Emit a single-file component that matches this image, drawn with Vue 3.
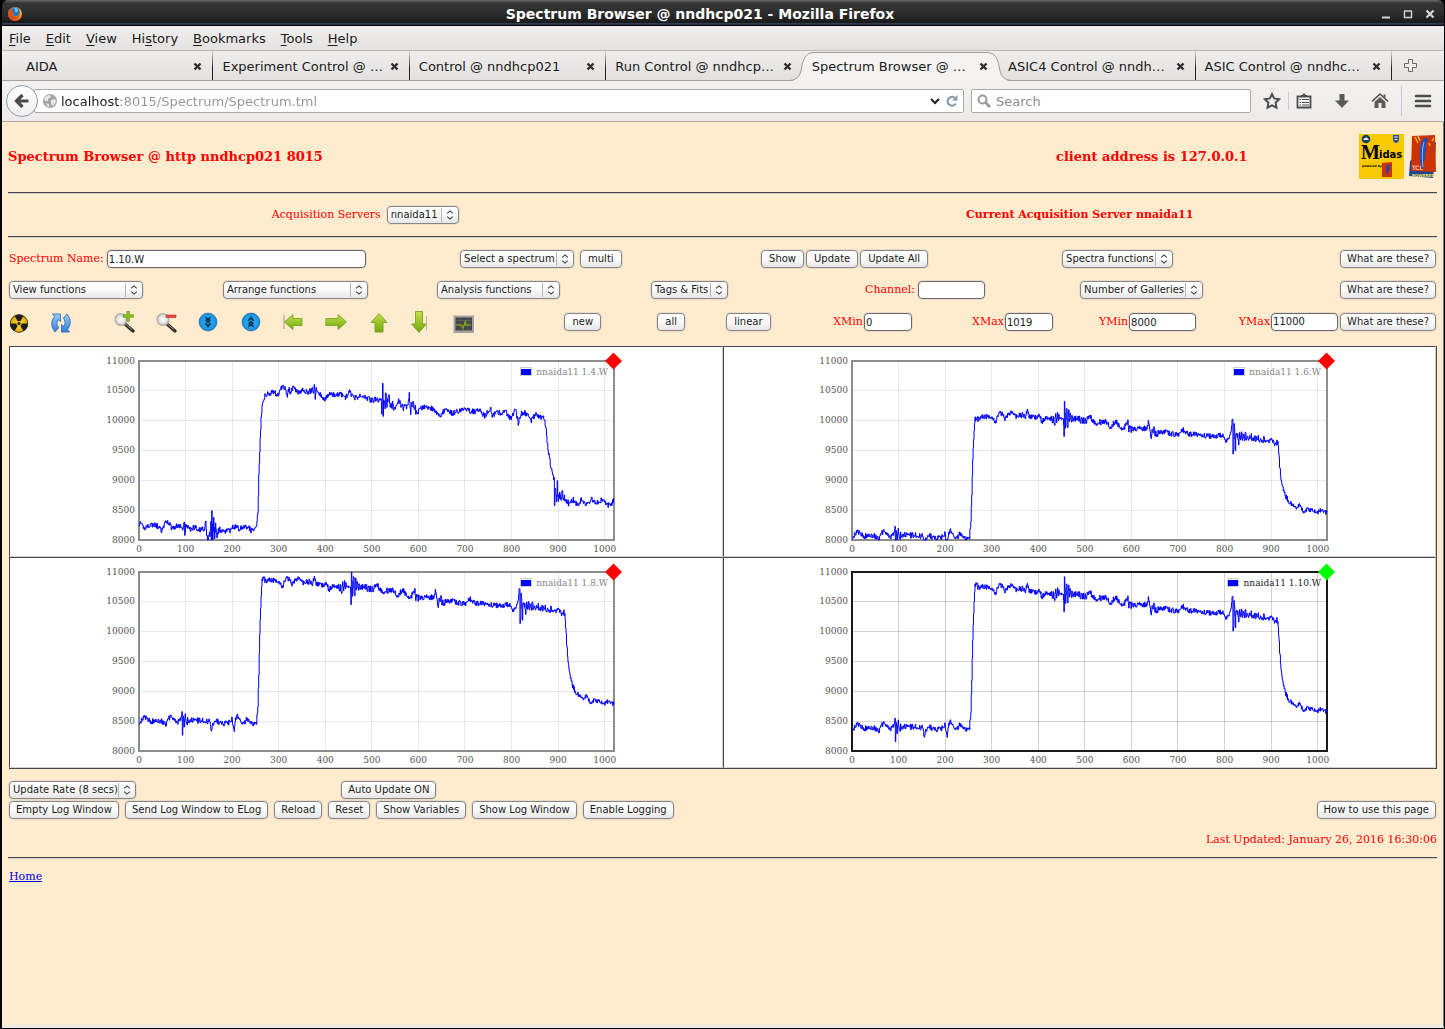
<script setup>
import { ref } from 'vue'

const menus = [
  ['', 'F', 'ile'],
  ['', 'E', 'dit'],
  ['', 'V', 'iew'],
  ['Hi', 's', 'tory'],
  ['', 'B', 'ookmarks'],
  ['', 'T', 'ools'],
  ['', 'H', 'elp'],
]

const tabs = [
  'AIDA',
  'Experiment Control @ …',
  'Control @ nndhcp021',
  'Run Control @ nndhcp…',
  'Spectrum Browser @ …',
  'ASIC4 Control @ nndh…',
  'ASIC Control @ nndhc…',
]
const activeTab = ref(4)

const url = ref('localhost:8015/Spectrum/Spectrum.tml')
const spectrumName = ref('1.10.W')
const channel = ref('')
const limits = ref({ xmin: '0', xmax: '1019', ymin: '8000', ymax: '11000' })

const logButtons = [
  'Empty Log Window',
  'Send Log Window to ELog',
  'Reload',
  'Reset',
  'Show Variables',
  'Show Log Window',
  'Enable Logging',
]

// plot geometry, in svg units
const plot = { left: 45, top: 14, width: 475, height: 179 }
const X_MAX = 1020
const Y_MIN = 8000
const Y_MAX = 11000
const xTicks = [0, 100, 200, 300, 400, 500, 600, 700, 800, 900, 1000]
const yTicks = [8000, 8500, 9000, 9500, 10000, 10500, 11000]

const px = (x) => plot.left + (x / X_MAX) * plot.width
const py = (y) => plot.top + ((Y_MAX - y) / (Y_MAX - Y_MIN)) * plot.height

const base14 = [
  [0, 8280], [10, 8200], [25, 8260], [38, 8240], [48, 8150], [58, 8310], [62, 8310], [70, 8200],
  [82, 8240], [95, 8200], [97, 8300], [98, 8120], [100, 8230], [110, 8190], [120, 8220], [130, 8170],
  [141, 8190], [143, 8340], [145, 8060], [147, 8000], [149, 8080], [152, 8100], [154, 8300], [155, 8000],
  [156, 8480], [158, 8000], [160, 8320], [162, 8080], [164, 8250], [168, 8050], [170, 8180], [180, 8140],
  [195, 8160], [200, 8230], [215, 8190], [225, 8240], [235, 8210], [240, 8160], [251, 8220], [255, 8450],
  [257, 9100], [260, 9700], [262, 10080], [265, 10330], [270, 10410], [280, 10460], [290, 10490], [297, 10410],
  [303, 10530], [310, 10580], [316, 10480], [318, 10380], [320, 10540], [325, 10470], [330, 10550], [342, 10470],
  [350, 10510], [360, 10480], [370, 10500], [371, 10590], [374, 10450], [376, 10570], [378, 10380], [380, 10530],
  [390, 10450], [398, 10350], [408, 10460], [420, 10420], [435, 10440], [443, 10380], [451, 10490], [460, 10380],
  [475, 10410], [490, 10370], [500, 10340], [508, 10360], [520, 10320], [521, 10120], [523, 10670], [524, 10100],
  [526, 10480], [528, 10200], [530, 10480], [532, 10190], [535, 10400], [540, 10280], [547, 10200], [557, 10340],
  [568, 10220], [577, 10260], [580, 10480], [582, 10200], [590, 10260], [597, 10120], [602, 10190], [615, 10220],
  [633, 10200], [645, 10080], [660, 10200], [672, 10120], [685, 10160], [700, 10220], [712, 10150], [730, 10170],
  [742, 10080], [755, 10210], [758, 10040], [762, 10120], [775, 10120], [787, 10150], [797, 10040], [805, 10120],
  [808, 10220], [812, 10060], [814, 9960], [820, 10120], [830, 10130], [842, 10010], [850, 10100], [866, 10050],
  [870, 10040], [873, 9900], [878, 9500], [884, 9230], [891, 9000], [892, 8570], [894, 9000], [896, 8600],
  [898, 8960], [900, 8650], [903, 8850], [905, 8640], [908, 8780], [915, 8660], [925, 8620], [930, 8680],
  [942, 8580], [950, 8690], [962, 8580], [972, 8680], [980, 8610], [992, 8670], [1000, 8640], [1006, 8580],
  [1014, 8600], [1020, 8700],
]

const base18 = [
  [0, 8490], [10, 8550], [15, 8560], [25, 8490], [40, 8520], [50, 8490], [57, 8450], [65, 8560],
  [70, 8560], [80, 8480], [90, 8520], [92, 8650], [93, 8250], [95, 8650], [97, 8380], [99, 8640],
  [101, 8440], [104, 8560], [110, 8510], [130, 8510], [151, 8500], [154, 8350], [158, 8430], [165, 8500],
  [180, 8460], [197, 8480], [199, 8570], [201, 8420], [204, 8370], [207, 8520], [211, 8580], [218, 8500],
  [221, 8420], [230, 8520], [240, 8490], [250, 8440], [252, 8480], [255, 8720], [257, 9300], [259, 10000],
  [262, 10600], [264, 10850], [266, 10930], [270, 10860], [290, 10860], [300, 10830], [308, 10770], [315, 10890],
  [321, 10880], [328, 10800], [340, 10890], [352, 10820], [368, 10840], [372, 10800], [376, 10900], [381, 10790],
  [390, 10780], [400, 10800], [408, 10710], [418, 10780], [430, 10760], [433, 10650], [436, 10770], [453, 10760],
  [455, 10500], [456, 11000], [458, 10630], [460, 10900], [463, 10690], [465, 10850], [468, 10750], [500, 10710],
  [512, 10760], [522, 10660], [535, 10690], [546, 10700], [555, 10600], [566, 10710], [575, 10590], [585, 10600],
  [591, 10690], [594, 10570], [610, 10570], [632, 10580], [637, 10700], [641, 10440], [647, 10580], [653, 10450],
  [660, 10510], [680, 10500], [698, 10460], [710, 10550], [718, 10490], [750, 10450], [775, 10440], [795, 10450],
  [803, 10330], [812, 10450], [815, 10580], [817, 10600], [818, 10160], [820, 10600], [823, 10290], [826, 10500],
  [829, 10330], [833, 10430], [850, 10400], [880, 10380], [900, 10350], [908, 10290], [912, 10330], [915, 10240],
  [918, 9800], [921, 9500], [925, 9250], [930, 9120], [935, 9020], [945, 8940], [952, 8880], [960, 8920],
  [970, 8810], [980, 8840], [995, 8790], [1010, 8840], [1020, 8780],
]

const shift16 = [[0, -430], [255, -430], [258, -560], [262, -760], [266, -890], [272, -810], [300, -780], [400, -720], [912, -690], [918, -560], [925, -400], [935, -340], [1020, -330]]
const shift110 = [[0, -120], [264, -90], [270, -110], [400, -120], [1020, -130]]

// ringing after a pulse: start, amplitude, decay length
const rings14 = [[98, 30, 15], [160, 60, 14], [372, 60, 14], [525, 150, 22], [582, 80, 18], [756, 40, 12], [808, 70, 16], [893, 120, 16]]
const rings18 = [[92, 100, 20], [427, 90, 24], [456, 130, 26], [590, 60, 15], [640, 60, 14], [816, 160, 28], [868, 80, 16]]

function lerp(points, x) {
  let i = 1
  while (i < points.length - 1 && points[i][0] < x) i++
  const [x0, y0] = points[i - 1]
  const [x1, y1] = points[i]
  return y0 + ((x - x0) / (x1 - x0)) * (y1 - y0)
}

function tracePath(base, shift, rings, seed) {
  let s = seed
  const rand = () => {
    s = (s * 16807) % 2147483647
    return s / 2147483647
  }
  let d = ''
  for (let x = 0; x <= X_MAX; x++) {
    let y = lerp(base, x) + (shift ? lerp(shift, x) : 0)
    y += (rand() - 0.5) * 90
    const sign = x % 4 < 2 ? 1 : -1
    for (const [start, amp, decay] of rings) {
      if (x >= start) y += sign * rand() * amp * Math.exp((start - x) / decay)
    }
    y = Math.min(Y_MAX, Math.max(Y_MIN, y))
    // each channel is drawn as a flat step
    d += x ? `H${px(x).toFixed(2)}V${py(y).toFixed(2)}` : `M${px(x)} ${py(y).toFixed(2)}`
  }
  return d
}

const spectra = [
  { name: 'nnaida11 1.4.W', legendX: 427, path: tracePath(base14, null, rings14, 41) },
  { name: 'nnaida11 1.6.W', legendX: 427, path: tracePath(base18, shift16, rings18, 77) },
  { name: 'nnaida11 1.8.W', legendX: 427, path: tracePath(base18, null, rings18, 77) },
  { name: 'nnaida11 1.10.W', legendX: 421, path: tracePath(base18, shift110, rings18, 77) },
]
const selected = ref(3)
</script>

<template>
  <div class="window">
    <!-- shared gradients -->
    <svg class="defs" width="0" height="0" aria-hidden="true">
      <defs>
        <linearGradient id="green" x1="0" y1="0" x2="0" y2="1">
          <stop offset="0" stop-color="#c4e04a" />
          <stop offset="1" stop-color="#6fa80d" />
        </linearGradient>
        <radialGradient id="blue">
          <stop offset="0" stop-color="#2fb8f5" />
          <stop offset="0.7" stop-color="#1ba0ea" />
          <stop offset="1" stop-color="#1c7cd0" />
        </radialGradient>
        <linearGradient id="sync" x1="0" y1="0" x2="0" y2="1">
          <stop offset="0" stop-color="#9bcbf7" />
          <stop offset="1" stop-color="#2f7fd6" />
        </linearGradient>
        <radialGradient id="lens">
          <stop offset="0" stop-color="#ffffff" />
          <stop offset="1" stop-color="#d3d3d3" />
        </radialGradient>
        <radialGradient id="hazard">
          <stop offset="0" stop-color="#ffe23a" />
          <stop offset="1" stop-color="#e0a800" />
        </radialGradient>
        <linearGradient id="fox" x1="0" y1="1" x2="1" y2="0">
          <stop offset="0" stop-color="#e0401c" />
          <stop offset="0.6" stop-color="#f58a1f" />
          <stop offset="1" stop-color="#ffe14d" />
        </linearGradient>
      </defs>
    </svg>

    <header class="titlebar">
      <svg class="fox" viewBox="0 0 16 16">
        <circle cx="8" cy="8" r="7" fill="url(#fox)" />
        <path d="M4 3Q7 0 11 2Q14 5 12 9Q10 11 7 10Q5 8 6 6Q4 5 4 3Z" fill="#2a76b8" />
        <path d="M7 2Q10 1 11 4Q11 7 8 6Q9 4 7 2Z" fill="#72c0ec" />
        <path d="M1 5L3 3L4 5L7 6L5 8Q6 11 9 11Q12 11 13 8Q12 13 8 14Q2 14 1 8Z" fill="#d9511c" />
      </svg>
      <h1>Spectrum Browser @ nndhcp021 - Mozilla Firefox</h1>
      <div class="win-buttons">
        <button aria-label="Minimize"><svg viewBox="0 0 10 10"><path d="M1 8.5H9" stroke="#d6d6d6" stroke-width="2" /></svg></button>
        <button aria-label="Maximize"><svg viewBox="0 0 10 10"><path d="M1.5 2V8.5H8.5V2M1 2H9" fill="none" stroke="#d6d6d6" stroke-width="1.4" /></svg></button>
        <button aria-label="Close"><svg viewBox="0 0 10 10"><path d="M1.5 1.5L8.5 8.5M8.5 1.5L1.5 8.5" stroke="#d6d6d6" stroke-width="2.2" /></svg></button>
      </div>
    </header>

    <nav class="menubar">
      <button v-for="[pre, key, post] in menus" :key="post">{{ pre }}<u>{{ key }}</u>{{ post }}</button>
    </nav>

    <div class="tabstrip">
      <div v-for="(tab, i) in tabs" :key="tab" class="tab" :class="{ active: i === activeTab, divided: i !== activeTab && i !== activeTab - 1 }">
        <template v-if="i === activeTab">
          <svg class="curve left" viewBox="0 0 23 29"><path d="M0 29Q9 28.500 11 19Q13 .5 23 .5V29Z" fill="#f4f3f2" /><path d="M0 28.500Q9 28 11 19Q13 .5 23 .5" fill="none" stroke="#9b9a98" /></svg>
          <span class="cap"></span>
          <svg class="curve right" viewBox="0 0 23 29"><path d="M23 29Q14 28.500 12 19Q10 .5 0 .5V29Z" fill="#f4f3f2" /><path d="M23 28.500Q14 28 12 19Q10 .5 0 .5" fill="none" stroke="#9b9a98" /></svg>
        </template>
        <button class="tab-label" @click="activeTab = i">{{ tab }}</button>
        <button class="tab-close" :aria-label="'Close ' + tab"><svg viewBox="0 0 9 9"><path d="M1.500 1.500L7.500 7.500M7.500 1.500L1.500 7.500" stroke="#2f2f2f" stroke-width="2.400" /></svg></button>
      </div>
      <button class="new-tab" aria-label="New tab">
        <svg viewBox="0 0 13 13"><path d="M4.500 .5H8.500V4.500H12.500V8.500H8.500V12.500H4.500V8.500H.5V4.500H4.500Z" fill="#f0efee" stroke="#6a6a6a" /></svg>
      </button>
    </div>

    <div class="navbar">
      <button class="back" aria-label="Back">
        <svg viewBox="0 0 16 16"><path d="M8.500 2L2.500 8L8.500 14M3 8H14.500" fill="none" stroke="#4a4a4a" stroke-width="3.200" /></svg>
      </button>
      <div class="urlbar">
        <svg class="globe" viewBox="0 0 14 14">
          <circle cx="7" cy="7" r="7" fill="#a3a3a3" />
          <path d="M2 3Q4 1 7 1L8 3L5 5L5 7L2 7L1 5ZM8 6L12 5L13 8L10 12L8 10ZM3 9L6 10L6 13L4 12Z" fill="#e6e6e6" />
        </svg>
        <input v-model="url" class="url" aria-label="Address" />
        <svg class="drop" viewBox="0 0 10 7"><path d="M1 1L5 5L9 1" fill="none" stroke="#222" stroke-width="2" /></svg>
        <button class="reload" aria-label="Reload page">
          <svg viewBox="0 0 12 12"><path d="M9.800 8.500A4.400 4.400 0 1 1 8.500 2.600" fill="none" stroke="#8697a8" stroke-width="2" /><path d="M11.500 0V5.500H6Z" fill="#8697a8" /></svg>
        </button>
      </div>
      <div class="search">
        <svg viewBox="0 0 14 14"><circle cx="5.500" cy="5.500" r="4" fill="none" stroke="#999" stroke-width="2" /><path d="M8.500 8.500L13 13" stroke="#999" stroke-width="2.600" /></svg>
        <input placeholder="Search" aria-label="Search" />
      </div>
      <div class="tools">
        <button aria-label="Bookmark"><svg viewBox="0 0 18 18"><path d="M9 2L11.200 6.500L16.200 7.200L12.600 10.700L13.500 15.700L9 13.300L4.500 15.700L5.400 10.700L1.800 7.200L6.800 6.500Z" fill="none" stroke="#4d4d4d" stroke-width="1.900" /></svg></button>
        <i class="bar short"></i>
        <button aria-label="Bookmarks menu"><svg viewBox="0 0 18 18"><path d="M2.500 4.500H15.500V15.500H2.500Z" fill="#fafafa" stroke="#4d4d4d" stroke-width="1.800" /><path d="M6 5V3H7.500Q7.500 1.500 9 1.500T10.500 3H12V5Z" fill="#4d4d4d" /><path d="M4.500 7.500H6M7 7.500H14M4.500 10.500H6M7 10.500H14M4.500 13H6M7 13H14" stroke="#4d4d4d" /></svg></button>
        <button aria-label="Downloads"><svg viewBox="0 0 18 18"><path d="M6.500 2H11.500V8.500H16L9 16L2 8.500H6.500Z" fill="#5a5a5a" /></svg></button>
        <button aria-label="Home page"><svg viewBox="0 0 18 18"><path d="M1 9.500L9 2L17 9.500" fill="none" stroke="#4d4d4d" stroke-width="1.600" /><path d="M3.500 10L9 5L14.500 10V16H10.500V11H7.500V16H3.500ZM12.500 2.500H14.500V6L12.500 4.500Z" fill="#5a5a5a" /></svg></button>
        <i class="bar"></i>
        <button aria-label="Open menu"><svg viewBox="0 0 18 18"><path d="M2 4H16M2 9H16M2 14H16" stroke="#4d4d4d" stroke-width="2.600" stroke-linecap="round" /></svg></button>
      </div>
    </div>

    <main class="page">
      <div class="masthead">
        <h2>Spectrum Browser @ http nndhcp021 8015</h2>
        <h2>client address is 127.0.0.1</h2>
        <div class="logos">
          <a href="#midas" aria-label="Midas">
            <svg width="45" height="45" viewBox="0 0 45 45">
              <path d="M0 0H45V45H0Z" fill="#f8c800" />
              <circle cx="7" cy="5" r="4.300" fill="#123e6b" />
              <path d="M4 6Q7 1 10 6Z" fill="#fff" />
              <path d="M34 1H40V5Q40 8 37 9Q34 8 34 5Z" fill="#2450a0" />
              <path d="M35 3H39M35.500 5.500H38.500" stroke="#dfe6f5" />
              <text x="2" y="25" class="logo-m">M</text>
              <text x="20" y="24" class="logo-idas">idas</text>
              <text x="3" y="33" class="logo-tiny">powered by</text>
              <path d="M23 29L33 28V43H23Z" fill="#cc3300" />
              <path d="M28 41Q26 36 28 31Q30 29 31 32Q30 38 28 41Z" fill="#2546a8" />
            </svg>
          </a>
          <a href="#tcl" aria-label="Tcl powered">
            <svg width="28" height="45" viewBox="0 0 28 45">
              <path d="M1 27L27 8L26 26L24 44L0 42Z" fill="#1d4796" />
              <path d="M3 2L26 1L27 38L2 37Z" fill="#cc3300" />
              <path d="M12 33Q9 20 12 10Q14 3 18 4Q20 6 17 9Q18 15 16 20Q17 26 14 29L15 35Z" fill="#1f4fc4" />
              <path d="M14 33Q12 19 15 8" fill="none" stroke="#9fb8ea" />
              <path d="M6 3L9 9M9 2L11 7M20 9L21 12M23 7L25 4" stroke="#f0b020" stroke-width="1.500" />
              <text x="3" y="36" class="logo-tcl">TCL</text>
              <text x="3" y="43" class="logo-powered">POWERED</text>
            </svg>
          </a>
        </div>
      </div>
      <hr />

      <div class="servers">
        <div>
          <label for="servers">Acquisition Servers</label>
          <span class="combo w72"><select id="servers"><option>nnaida11</option></select><svg viewBox="0 0 7 9"><path d="M1 3L3.500 .8L6 3M1 6L3.500 8.200L6 6" /></svg></span>
        </div>
        <strong>Current Acquisition Server nnaida11</strong>
      </div>
      <hr />

      <form class="controls" @submit.prevent>
        <div class="row names">
          <div>
            <label for="name">Spectrum Name:</label><input id="name" v-model="spectrumName" class="box w259" />
          </div>
          <div class="spaced">
            <span class="combo w114"><select aria-label="Select a spectrum"><option>Select a spectrum</option></select><svg viewBox="0 0 7 9"><path d="M1 3L3.500 .8L6 3M1 6L3.500 8.200L6 6" /></svg></span>
            <button>multi</button>
          </div>
          <div class="tight">
            <button>Show</button>
            <button>Update</button>
            <button>Update All</button>
          </div>
          <div>
            <span class="combo w111"><select aria-label="Spectra functions"><option>Spectra functions</option></select><svg viewBox="0 0 7 9"><path d="M1 3L3.500 .8L6 3M1 6L3.500 8.200L6 6" /></svg></span>
          </div>
          <button>What are these?</button>
        </div>

        <div class="row functions">
          <div><span class="combo w134"><select aria-label="View functions"><option>View functions</option></select><svg viewBox="0 0 7 9"><path d="M1 3L3.500 .8L6 3M1 6L3.500 8.200L6 6" /></svg></span></div>
          <div><span class="combo w145"><select aria-label="Arrange functions"><option>Arrange functions</option></select><svg viewBox="0 0 7 9"><path d="M1 3L3.500 .8L6 3M1 6L3.500 8.200L6 6" /></svg></span></div>
          <div><span class="combo w123"><select aria-label="Analysis functions"><option>Analysis functions</option></select><svg viewBox="0 0 7 9"><path d="M1 3L3.500 .8L6 3M1 6L3.500 8.200L6 6" /></svg></span></div>
          <div><span class="combo w77"><select aria-label="Tags &amp; Fits"><option>Tags &amp; Fits</option></select><svg viewBox="0 0 7 9"><path d="M1 3L3.500 .8L6 3M1 6L3.500 8.200L6 6" /></svg></span></div>
          <div><label for="channel">Channel:</label><input id="channel" v-model="channel" class="box w67" /></div>
          <div><span class="combo w123"><select aria-label="Number of Galleries"><option>Number of Galleries</option></select><svg viewBox="0 0 7 9"><path d="M1 3L3.500 .8L6 3M1 6L3.500 8.200L6 6" /></svg></span></div>
          <button>What are these?</button>
        </div>

        <div class="row icons">
          <button class="icon" aria-label="Zero">
            <svg viewBox="1 -1 22 22">
              <circle cx="11" cy="11.500" r="9" fill="#1c1c1c" />
              <path d="M11 11.500L6.500 3.700A9 9 0 0 1 15.500 3.700ZM11 11.500L19.900 11.500A9 9 0 0 1 15.500 19.300ZM11 11.500L6.500 19.300A9 9 0 0 1 2.100 11.500Z" fill="#1c1c1c" />
              <path d="M11 11.500L2.100 11.500A9 9 0 0 1 6.500 3.700ZM11 11.500L15.500 3.700A9 9 0 0 1 19.900 11.500ZM11 11.500L15.500 19.300A9 9 0 0 1 6.500 19.300Z" fill="url(#hazard)" />
              <circle cx="11" cy="11.500" r="2.600" fill="#f5c710" /><circle cx="11" cy="11.500" r="1.500" fill="#1c1c1c" />
              <circle cx="11" cy="11.500" r="8.700" fill="none" stroke="#333" stroke-width=".8" />
            </svg>
          </button>
          <button class="icon" aria-label="Refresh">
            <svg viewBox="1 -1 22 22">
              <path d="M10.500 2V9.500L8 7.500Q5.500 11.500 8.500 16L5 20Q-1.500 12 4.500 4.500L2.500 2Z" fill="url(#sync)" stroke="#2565b5" stroke-width=".8" />
              <path d="M11.500 20V12.500L14 14.500Q16.500 10.500 13.500 6L17 2Q23.500 10 17.500 17.500L19.500 20Z" fill="url(#sync)" stroke="#2565b5" stroke-width=".8" />
            </svg>
          </button>
          <button class="icon" aria-label="Zoom in">
            <svg viewBox="0 0 22 22">
              <path d="M12 13L20 20" stroke="#2a2a2a" stroke-width="3.200" stroke-linecap="round" /><path d="M13 13.500L19 18.500" stroke="#999" />
              <circle cx="8" cy="8.500" r="5.800" fill="url(#lens)" stroke="#b5b0a8" stroke-width="1.500" />
              <path d="M13.800 0H16.500V3.700H20.500V6.300H16.500V10.300H13.800V6.300H10V3.700H13.800Z" fill="#8cc31c" stroke="#5d9010" stroke-width=".6" />
            </svg>
          </button>
          <button class="icon" aria-label="Zoom out">
            <svg viewBox="0 0 22 22">
              <path d="M12 13L20 20" stroke="#2a2a2a" stroke-width="3.200" stroke-linecap="round" /><path d="M13 13.500L19 18.500" stroke="#999" />
              <circle cx="8" cy="8.500" r="5.800" fill="url(#lens)" stroke="#b5b0a8" stroke-width="1.500" />
              <path d="M11 4H21V6.600H11Z" fill="#e64545" stroke="#b83030" stroke-width=".6" />
            </svg>
          </button>
          <button class="icon" aria-label="Page down">
            <svg viewBox="0 0 22 22"><circle cx="10" cy="11" r="9" fill="url(#blue)" stroke="#2360a0" stroke-width=".6" /><path d="M7 5.500L10 7L13 5.500L12 9.500H13.500L10 12.500L6.500 9.500H8ZM7.500 11.500L10 13.500L12.500 11.500L13.500 12.500L10 17L6.500 12.500Z" fill="#123a66" /></svg>
          </button>
          <button class="icon" aria-label="Page up">
            <svg viewBox="0 0 22 22"><circle cx="11" cy="11" r="9" fill="url(#blue)" stroke="#2360a0" stroke-width=".6" /><path d="M8 16.500L11 15L14 16.500L13 12.500H14.500L11 9.500L7.500 12.500H9ZM8.500 10.500L11 8.500L13.500 10.500L14.500 9.500L11 5L7.500 9.500Z" fill="#123a66" /></svg>
          </button>
          <button class="icon" aria-label="Left">
            <svg viewBox="0 0 22 22"><path d="M1.500 11L10 3.500V7.500H19V14.500H10V18.500Z" fill="url(#green)" stroke="#6d9c1a" stroke-width=".8" /><path d="M1 4V18" stroke="#8d865c" stroke-width=".8" /></svg>
          </button>
          <button class="icon" aria-label="Right">
            <svg viewBox="0 0 22 22"><path d="M21.500 11L13 3.500V7.500H.8V14.500H13V18.500Z" fill="url(#green)" stroke="#6d9c1a" stroke-width=".8" /></svg>
          </button>
          <button class="icon" aria-label="Up">
            <svg viewBox="0 0 22 22"><path d="M11 2.500L19 11.500H15V21H7V11.500H3Z" fill="url(#green)" stroke="#6d9c1a" stroke-width=".8" /></svg>
          </button>
          <button class="icon" aria-label="Down">
            <svg viewBox="0 0 22 22"><path d="M9 21.500L16.500 13H12.500V.5H5.500V13H1.500Z" fill="url(#green)" stroke="#6d9c1a" stroke-width=".8" /><path d="M16.500 5V19" stroke="#a8a27c" stroke-width=".8" /></svg>
          </button>
          <button class="icon" aria-label="Monitor">
            <svg viewBox="0 -1 22 22"><path d="M.5 3.500H21V21H.5Z" fill="#a4a4a4" /><path d="M2.500 5.500H19V18.500H2.500Z" fill="#454545" /><path d="M3 8.500H18.500M7 6V18.500M15 6V18.500" stroke="#646464" stroke-width=".6" /><path d="M3 13H8.500L10 16.500L12.500 8.500V13H18" fill="none" stroke="#7ba11e" stroke-width="1.400" /></svg>
          </button>
          <div class="spaced"><button>new</button></div>
          <div class="spaced"><button>all</button></div>
          <div class="spaced"><button>linear</button></div>
          <div><label for="xmin">XMin</label><input id="xmin" v-model="limits.xmin" class="box w48" /></div>
          <div><label for="xmax">XMax</label><input id="xmax" v-model="limits.xmax" class="box w48" /></div>
          <div><label for="ymin">YMin</label><input id="ymin" v-model="limits.ymin" class="box w67" /></div>
          <div class="last">
            <span><label for="ymax">YMax</label><input id="ymax" v-model="limits.ymax" class="box w67" /></span>
            <button>What are these?</button>
          </div>
        </div>
      </form>

      <section class="gallery">
        <div v-for="(sp, i) in spectra" :key="sp.name" class="cell">
          <svg class="chart" :class="{ selected: i === selected }" width="544" height="209" viewBox="0 0 544 209" role="img" :aria-label="sp.name" @click="selected = i">
            <g class="grid">
              <path v-for="t in xTicks.slice(1)" :key="'x' + t" :d="`M${Math.floor(px(t)) + 0.5} ${plot.top}v${plot.height}`" />
              <path v-for="t in yTicks.slice(1, -1)" :key="'y' + t" :d="`M${plot.left} ${Math.floor(py(t)) + 0.5}h${plot.width}`" />
            </g>
            <g class="ticks">
              <text v-for="t in xTicks" :key="'lx' + t" :x="px(t)" :y="plot.top + 191" text-anchor="middle">{{ t }}</text>
              <text v-for="t in yTicks" :key="'ly' + t" :x="plot.left - 4" :y="Math.floor(py(t)) + 3" text-anchor="end">{{ t }}</text>
            </g>
            <rect class="frame" :x="plot.left" :y="plot.top" :width="plot.width" :height="plot.height" />
            <path class="trace" :d="sp.path" />
            <g class="legend">
              <rect :x="sp.legendX - 0.5" y="20.500" width="11" height="8" fill="#fff" stroke="#ccc" />
              <rect :x="sp.legendX" y="22" width="10" height="6" fill="#00f" />
              <text :x="plot.left + 469" y="28" text-anchor="end">{{ sp.name }}</text>
            </g>
            <path class="handle" d="M519.500 5.500L528 14L519.500 22.500L511 14Z" />
          </svg>
        </div>
      </section>

      <div class="update">
        <div><span class="combo w127"><select aria-label="Update Rate"><option>Update Rate (8 secs)</option></select><svg viewBox="0 0 7 9"><path d="M1 3L3.500 .8L6 3M1 6L3.500 8.200L6 6" /></svg></span></div>
        <div><button>Auto Update ON</button></div>
      </div>
      <div class="log">
        <button v-for="b in logButtons" :key="b">{{ b }}</button>
        <button class="help">How to use this page</button>
      </div>
      <p class="updated">Last Updated: January 26, 2016 16:30:06</p>
      <hr />
      <a class="home" href="#home">Home</a>
    </main>
  </div>
</template>

<style>
body {
  margin: 0;
  background: #000;
}
</style>

<style scoped>
.window {
  box-sizing: border-box;
  display: flex;
  flex-direction: column;
  min-height: 100vh;
  border-left: 2px solid #000;
  border-right: 1px solid #000;
  border-bottom: 1px solid #000;
  font: 13px/16px 'DejaVu Sans', sans-serif;
  color: #1a1a1a;
}

.defs {
  position: absolute;
}

button,
input,
select {
  box-sizing: border-box;
  margin: 0;
  font-family: 'DejaVu Sans', sans-serif;
  color: #1a1a1a;
}

svg {
  display: block;
  flex: none;
}

/* browser chrome */
.titlebar {
  display: flex;
  align-items: center;
  box-sizing: border-box;
  height: 26px;
  padding: 1px 9px 0 5px;
  background: linear-gradient(#6a6a6a, #353535 3px, #2c2c2c 14px, #191919 23px, #46638a 24px, #000 25px);
  border-radius: 6px 6px 0 0;
}

.fox {
  width: 16px;
  height: 16px;
}

.titlebar h1 {
  flex: 1;
  margin: 0;
  padding-right: 4px;
  font-size: 14px;
  text-align: center;
  color: #fff;
}

.win-buttons {
  display: flex;
  gap: 12px;
}

.win-buttons button,
.menubar button,
.tab button,
.new-tab,
.reload,
.tools button,
.icon {
  padding: 0;
  border: 0;
  background: none;
}

.win-buttons svg {
  width: 10px;
  height: 10px;
}

.menubar {
  display: flex;
  gap: 15px;
  height: 24px;
  padding-left: 7px;
  background: linear-gradient(#f0efee, #e3e2e0);
  border-bottom: 1px solid #b9b8b6;
}

.menubar button {
  font-size: 13px;
}

.menubar u {
  text-underline-offset: 2px;
}

.tabstrip {
  display: flex;
  height: 29px;
  padding-left: 15px;
  background: linear-gradient(#efeeed, #e2e1df);
  border-bottom: 1px solid #a5a4a2;
}

.tab {
  position: relative;
  display: flex;
  flex: 1;
  align-items: center;
  justify-content: space-between;
  box-sizing: border-box;
  min-width: 0;
  padding: 2px 10px 0 9px;
  border-right: 1px solid transparent;
}

.tab.divided {
  border-image: linear-gradient(#e2e1df, #222 60%) 1;
  border-width: 0 1px 0 0;
}

.tab-label {
  position: relative;
  font-size: 13px;
  white-space: nowrap;
}

.tab-close {
  position: relative;
}

.tab-close svg {
  width: 9px;
  height: 9px;
}

.curve,
.cap {
  position: absolute;
  top: 1px;
  width: 23px;
  height: 29px;
}

.curve.left {
  left: -13px;
}

.curve.right {
  right: -13px;
}

.cap {
  left: 10px;
  right: 10px;
  box-sizing: border-box;
  width: auto;
  background: #f4f3f2;
  border-top: 1px solid #9b9a98;
}

.new-tab {
  width: 37px;
  margin-right: 15px;
}

.new-tab svg {
  width: 13px;
  margin: 0 auto;
}

.navbar {
  display: flex;
  align-items: center;
  height: 40px;
  padding: 0 12px 0 4px;
  background: linear-gradient(#f3f2f1, #ecebea);
  border-bottom: 1px solid #b0a79a;
}

.back {
  position: relative;
  width: 32px;
  height: 32px;
  padding: 0;
  background: linear-gradient(#fff, #f0efef);
  border: 1px solid #8d9aab;
  border-radius: 50%;
}

.back svg {
  width: 16px;
  height: 16px;
  margin: 0 auto;
}

.urlbar,
.search {
  display: flex;
  align-items: center;
  box-sizing: border-box;
  height: 24px;
  background: #fff;
  border: 1px solid #aba9a6;
  border-radius: 2px;
}

.urlbar {
  flex: 1;
  min-width: 0;
  margin-left: -4px;
  padding: 0 5px 0 8px;
}

.globe {
  width: 14px;
  height: 14px;
  margin-right: 4px;
}

.url,
.search input {
  flex: 1;
  min-width: 0;
  padding: 0;
  border: 0;
  outline: 0;
  background: none;
  font-size: 13px;
}

/* host dark, rest of the address grey */
.url {
  background: linear-gradient(to right, #1a1a1a 60px, #949494 60px);
  -webkit-background-clip: text;
  background-clip: text;
  color: transparent;
}

.drop {
  width: 10px;
  margin-right: 6px;
}

.reload svg {
  width: 12px;
}

.search {
  width: 280px;
  margin: 0 12px 0 7px;
  padding: 0 5px;
  gap: 5px;
}

.search svg {
  width: 14px;
}

.search input::placeholder {
  color: #8e8e8e;
  opacity: 1;
}

.tools {
  display: flex;
  align-items: center;
}

.tools svg {
  width: 18px;
}

.tools button + button {
  margin-left: 20px;
}

.bar {
  width: 1px;
  height: 30px;
  margin: 0 12px;
  background: #c2ccd6;
}

.bar.short {
  height: 18px;
  margin: 0 6px 0 7px;
}

/* page */
.page {
  flex: 1;
  padding: 0 6px;
  background: #ffebcd;
  border-right: 1px solid #777;
  border-bottom: 3px solid #ebebea;
  font: 11px/18px 'DejaVu Serif', serif;
  color: #f00;
}

hr {
  margin: 0;
  border: 0;
  border-top: 1px solid #44464c;
  border-bottom: 1px solid #d3d0cc;
}

.masthead {
  display: grid;
  grid-template-columns: 1048fr 303fr auto;
  align-items: center;
  height: 70px;
}

.masthead h2 {
  margin: 0;
  font-size: 13px;
  white-space: nowrap;
}

.logos {
  display: flex;
  gap: 5px;
  padding-bottom: 2px;
}

.logos a {
  display: block;
}

.logo-m {
  font: bold 20px 'Liberation Serif', serif;
}

.logo-idas {
  font: bold 10px 'DejaVu Sans', sans-serif;
}

.logo-tiny {
  font: bold 3px 'DejaVu Sans', sans-serif;
}

.logo-tcl {
  font: 6px 'DejaVu Sans', sans-serif;
  fill: #fff;
}

.logo-powered {
  font: bold 4px 'DejaVu Sans', sans-serif;
  fill: #f2e74a;
}

.servers {
  display: grid;
  grid-template-columns: 1fr 1fr;
  align-items: center;
  height: 42px;
  text-align: center;
}

.servers > div {
  display: flex;
  justify-content: center;
  gap: 6px;
}

.page button:not(.icon),
.combo select,
.box {
  height: 18px;
  border: 1px solid #85868a;
  border-radius: 4px;
  box-shadow: 0 0 0 1px rgba(150, 155, 165, 0.2);
  font-size: 10px;
  line-height: 16px;
}

.page button:not(.icon),
.combo select {
  background: linear-gradient(#fff, #fbfbfb 50%, #e6e5e4);
  white-space: nowrap;
}

.page button:not(.icon) {
  padding: 0 6px;
}

.page .spaced button:not(.icon),
.page .tight button:not(.icon) {
  padding: 0 7px;
}

.combo {
  position: relative;
  display: inline-block;
  height: 18px;
}

.combo select {
  display: block;
  appearance: none;
  width: 100%;
  padding: 0 0 0 3px;
}

.combo svg {
  position: absolute;
  top: 2px;
  right: 4px;
  box-sizing: border-box;
  width: 14px;
  height: 14px;
  padding: 2px 0 2px 3px;
  border-left: 1px solid #b5b5b5;
  pointer-events: none;
}

.combo path {
  fill: none;
  stroke: #3a3a3a;
}

.box {
  padding: 0 1px;
  background: #fff;
  border-color: #66686d;
}

.w48 { width: 48px; }
.w67 { width: 67px; }
.w72 { width: 72px; }
.w77 { width: 77px; }
.w111 { width: 111px; }
.w114 { width: 114px; }
.w123 { width: 123px; }
.w127 { width: 127px; }
.w134 { width: 134px; }
.w145 { width: 145px; }
.w259 { width: 259px; }

.controls {
  padding: 12px 1px 0 1px;
}

.row {
  display: grid;
  align-items: center;
}

.row > div {
  display: flex;
  min-width: 0;
  white-space: nowrap;
}

.row label {
  flex: none;
  margin: 0 3px 0 0;
}

.icons label {
  margin: 0 1px 0 0;
}

.row .spaced {
  gap: 6px;
}

.row .tight {
  gap: 2px;
}

.names {
  grid-template-columns: 451fr 301fr 301fr 278fr auto;
}

.functions {
  grid-template-columns: repeat(4, 214fr) 215fr 260fr auto;
  margin-top: 13px;
}

.icons {
  grid-template-columns: 84fr 124fr repeat(8, 85fr) 224fr 186fr 138fr 214fr 278fr 254fr 280fr auto;
  margin-top: 12px;
}

.row .last {
  gap: 2px;
}

.icon svg {
  width: 22px;
  height: 22px;
}

.gallery {
  display: grid;
  grid-template-columns: 1fr 1fr;
  margin: 13px 0 12px 1px;
  background: #fff;
  border-right: 1px solid #44464c;
  border-bottom: 1px solid #44464c;
}

.cell {
  display: flex;
  justify-content: center;
  min-width: 0;
  border: 1px solid #d0d1d6;
  border-top-color: #44464c;
  border-left-color: #44464c;
}

.chart {
  flex: 0 1 auto;
  min-width: 0;
}

.chart text {
  font: 9px 'DejaVu Serif', serif;
  fill: #545454;
}

.grid path {
  stroke: rgba(0, 0, 0, 0.09);
  stroke-width: 1;
}

.frame {
  fill: none;
  stroke: #8d8d8d;
  stroke-width: 2;
}

.trace {
  fill: none;
  stroke: #00f;
  stroke-width: 1;
}

.chart .legend text {
  fill: #858585;
}

.handle {
  fill: #f00;
}

.selected .grid path {
  stroke: rgba(0, 0, 0, 0.18);
}

.selected .frame {
  stroke: #1a1a1a;
}

.chart.selected .legend text {
  fill: #222;
}

.selected .handle {
  fill: #0f0;
}

.update {
  display: grid;
  grid-template-columns: 332fr 1095fr;
  padding-left: 1px;
}

.update > div,
.log {
  display: flex;
}

.log {
  gap: 6px;
  margin-top: 2px;
  padding: 0 1px;
}

.help {
  margin-left: auto;
}

.updated {
  margin: 12px 0 8px;
  text-align: right;
}

.home {
  display: inline-block;
  margin: 9px 1px;
  color: #00e;
}
</style>
